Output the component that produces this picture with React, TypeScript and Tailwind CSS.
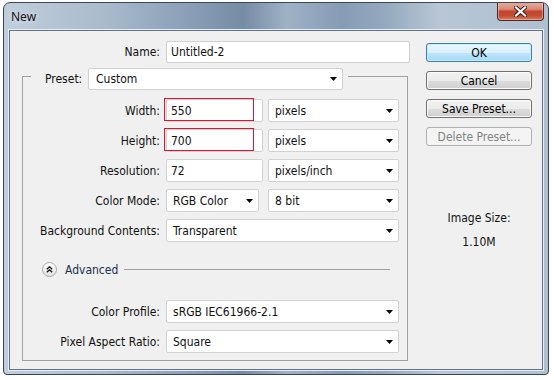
import React from "react";

const FONT = "font-['DejaVu_Sans_Condensed','DejaVu_Sans',sans-serif] text-[12px] leading-[14px] text-[#111]";

function Arrow() {
  return (
    <svg width="7" height="4" viewBox="0 0 7 4" className="shrink-0">
      <path d="M0 0H7L3.5 4Z" fill="#000" />
    </svg>
  );
}

function Select({ w, value }: { w: string; value: string }) {
  return (
    <div
      className={`${w} h-[23px] flex items-center justify-between pl-[6px] pr-[5px] bg-white border border-[#d2d2d2] rounded-[2px] shrink-0`}
    >
      <span className="whitespace-nowrap">{value}</span>
      <Arrow />
    </div>
  );
}

function TextInput({ w, value, red }: { w: string; value: string; red?: boolean }) {
  return (
    <div className={`${w} h-[23px] relative flex items-center pl-[4px] bg-white border border-[#d2d2d2] rounded-[2px] shrink-0`}>
      <span>{value}</span>
      {red && <div className="absolute left-[-3px] top-[-2px] w-[90px] h-[23px] border border-[#e3122e]" />}
    </div>
  );
}

function Row({ label, children }: { label: string; children: React.ReactNode }) {
  return (
    <div className="flex items-center h-[23px]">
      <div className="w-[137px] text-right whitespace-nowrap">{label}</div>
      <div className="ml-[6px] flex items-center">{children}</div>
    </div>
  );
}

function Button({ children, kind }: { children: React.ReactNode; kind: "ok" | "normal" | "disabled" }) {
  const cls =
    kind === "ok"
      ? "border-[#3c7fb1] bg-[linear-gradient(#eaf6fd,#d9f0fc_50%,#bee6fd_52%,#a7d9f5)] shadow-[inset_0_0_0_1px_#c9ecfc] text-black"
      : kind === "normal"
      ? "border-[#707070] bg-[linear-gradient(#f2f2f2,#ebebeb_50%,#dddddd_52%,#cfcfcf)] shadow-[inset_0_0_0_1px_#fbfbfb] text-black"
      : "border-[#adb2b5] bg-[#f4f4f4] text-[#838383]";
  return (
    <div className={`w-[106px] h-[19px] flex items-center justify-center rounded-[3px] border ${cls}`}>
      {children}
    </div>
  );
}

export default function App() {
  return (
    <div className="w-[554px] h-[380px] bg-white pl-[3px] pt-[2px]">
      <div className="w-[546px] h-[373px] flex flex-col rounded-t-[7px] rounded-b-[4px] border border-[#3b4654] overflow-hidden bg-[linear-gradient(90deg,#c0cedc_0%,#aabbcc_18%,#889db4_35%,#768ca4_44%,#9fb1c5_52%,#869cb4_62%,#94a9be_70%,#b8c6d5_80%,#afc0d1_100%)]">
        {/* title bar */}
        <div className="h-[27px] flex items-start justify-between pl-[7px] pr-[4px] shrink-0">
          <div className="mt-[6px] font-['Noto_Sans','Open_Sans',sans-serif] text-[12px] leading-[16px] text-[#111] [text-shadow:0_0_6px_rgba(255,255,255,0.8)]">
            New
          </div>
          <div className="w-[47px] h-[19px] -mt-px flex items-center justify-center rounded-b-[4px] border border-t-0 border-[#4e2a25] bg-[linear-gradient(#e7ada0,#d98a78_40%,#c3452d_52%,#c24c33_75%,#d77a5c)] shadow-[inset_0_0_0_1px_rgba(255,220,210,0.45)]">
            <svg width="13" height="11" viewBox="0 0 13 11">
              <path d="M2 1.5L11 9.5M11 1.5L2 9.5" stroke="#3a1a16" strokeWidth="4" strokeLinecap="square" />
              <path d="M2 1.5L11 9.5M11 1.5L2 9.5" stroke="#ffffff" strokeWidth="2.2" strokeLinecap="square" />
            </svg>
          </div>
        </div>
        {/* client */}
        <div className="flex-1 px-[5px] pb-[4px]">
          <div className={`h-full flex border border-[#627386] bg-[#f0f0f0] shadow-[0_0_0_1px_#e6edf4] ${FONT}`}>
            {/* left column */}
            <div className="w-[400px] pt-[10px] flex flex-col">
              <div className="flex items-center h-[22px]">
                <div className="w-[150px] text-right">Name:</div>
                <div className="ml-[6px] w-[244px] h-[22px] flex items-center pl-[4px] bg-white border border-[#d2d2d2] rounded-[2px]">
                  Untitled-2
                </div>
              </div>
              {/* group box */}
              <div className="mt-[5px] ml-[12px] w-[386px] flex flex-col">
                <div className="h-[22px] flex">
                  <div className="w-[9px] h-[14px] self-end border-t border-l border-[#a0a0a0]" />
                  <div className="flex items-center pl-[14px] pr-[5px]">
                    <span className="w-[43px] whitespace-nowrap">Preset:</span>
                    <div className="w-[255px] h-[22px] flex items-center justify-between pl-[7px] pr-[5px] bg-white border border-[#d2d2d2] rounded-[2px]">
                      <span>Custom</span>
                      <Arrow />
                    </div>
                  </div>
                  <div className="flex-1 h-[14px] self-end border-t border-r border-[#a0a0a0]" />
                </div>
                <div className="border-l border-r border-b border-[#a0a0a0] pt-[9px] pb-[7px] flex flex-col gap-[7px]">
                  <Row label="Width:">
                    <TextInput w="w-[97px]" value="550" red />
                    <div className="ml-[5px]">
                      <Select w="w-[131px]" value="pixels" />
                    </div>
                  </Row>
                  <Row label="Height:">
                    <TextInput w="w-[97px]" value="700" red />
                    <div className="ml-[5px]">
                      <Select w="w-[131px]" value="pixels" />
                    </div>
                  </Row>
                  <Row label="Resolution:">
                    <TextInput w="w-[97px]" value="72" />
                    <div className="ml-[5px]">
                      <Select w="w-[131px]" value="pixels/inch" />
                    </div>
                  </Row>
                  <Row label="Color Mode:">
                    <Select w="w-[93px]" value="RGB Color" />
                    <div className="ml-[9px]">
                      <Select w="w-[131px]" value="8 bit" />
                    </div>
                  </Row>
                  <Row label="Background Contents:">
                    <Select w="w-[233px]" value="Transparent" />
                  </Row>
                  <div className="mt-[13px] h-[15px] flex items-center">
                    <div className="ml-[19px] w-[15px] h-[15px] rounded-full border border-[#a9a9a9] bg-[linear-gradient(#ffffff,#e2e2e2)] flex items-center justify-center">
                      <svg width="7" height="7" viewBox="0 0 7 7">
                        <path d="M0.8 3.2L3.5 0.8L6.2 3.2M0.8 6.2L3.5 3.8L6.2 6.2" stroke="#111" strokeWidth="1.3" fill="none" />
                      </svg>
                    </div>
                    <span className="ml-[8px] text-[#1b2f4c]">Advanced</span>
                    <div className="flex-1 ml-[6px] mr-[17px] h-px bg-[#a0a0a0]" />
                  </div>
                  <div className="mt-[16px]">
                    <Row label="Color Profile:">
                      <Select w="w-[233px]" value="sRGB IEC61966-2.1" />
                    </Row>
                  </div>
                  <Row label="Pixel Aspect Ratio:">
                    <Select w="w-[233px]" value="Square" />
                  </Row>
                </div>
              </div>
            </div>
            {/* right column */}
            <div className="ml-[16px] w-[106px] pt-[12px] flex flex-col">
              <div className="flex flex-col gap-[9px]">
                <Button kind="ok">OK</Button>
                <Button kind="normal">Cancel</Button>
                <Button kind="normal">Save Preset...</Button>
                <Button kind="disabled">Delete Preset...</Button>
              </div>
              <div className="mt-[65px] text-center">Image Size:</div>
              <div className="mt-[10px] text-center">1.10M</div>
            </div>
          </div>
        </div>
      </div>
    </div>
  );
}
